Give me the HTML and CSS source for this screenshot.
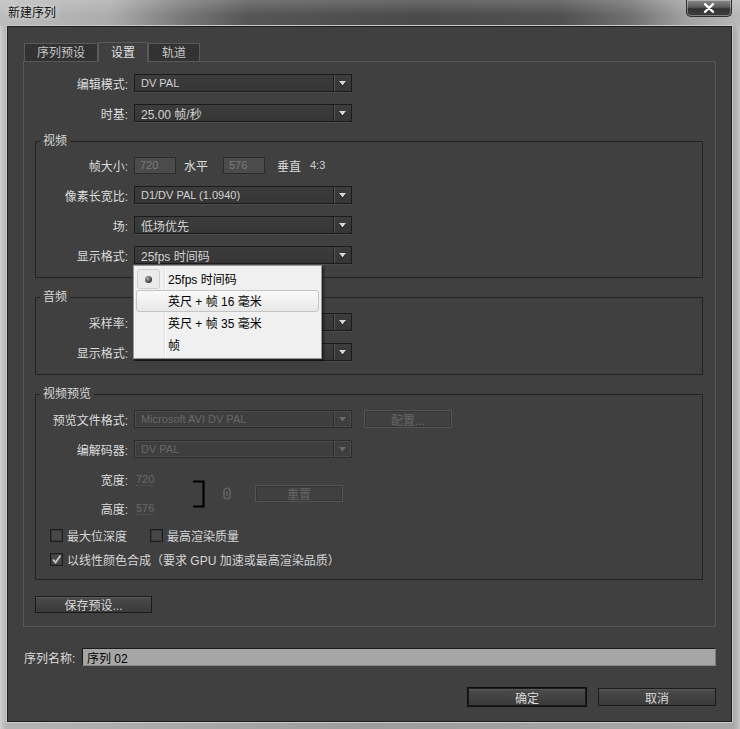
FILE: index.html
```html
<!DOCTYPE html>
<html lang="zh-CN">
<head>
<meta charset="utf-8">
<title>新建序列</title>
<link rel="stylesheet" href="styles.css">
</head>
<body>
<div class="win">
  <div class="titlebar">
    <span class="title">新建序列</span>
    <span class="close"><svg width="12" height="10" viewBox="0 0 12 10"><path d="M2 1.2 L10 8.8 M10 1.2 L2 8.8" stroke="#fff" stroke-width="2.3" stroke-linecap="round"/></svg></span>
  </div>
  <div class="client">
    <div class="tabs">
      <span class="tab t1">序列预设</span>
      <span class="tab t2 active">设置</span>
      <span class="tab t3">轨道</span>
    </div>
    <div class="panel">
      <div class="row"><span class="lbl">编辑模式:</span><div class="select"><span class="val lat">DV PAL</span><span class="arrow"><svg width="7" height="5" viewBox="0 0 7 5"><polygon points="0,0 7,0 3.5,4.5"/></svg></span></div></div>
      <div class="row"><span class="lbl">时基:</span><div class="select"><span class="val">25.00 帧/秒</span><span class="arrow"><svg width="7" height="5" viewBox="0 0 7 5"><polygon points="0,0 7,0 3.5,4.5"/></svg></span></div></div>

      <fieldset class="group g-video">
        <legend>视频</legend>
        <div class="row"><span class="lbl">帧大小:</span><span class="num">720</span><span class="unit">水平</span><span class="num">576</span><span class="unit unit2">垂直</span><span class="ratio lat">4:3</span></div>
        <div class="row"><span class="lbl">像素长宽比:</span><div class="select"><span class="val lat">D1/DV PAL (1.0940)</span><span class="arrow"><svg width="7" height="5" viewBox="0 0 7 5"><polygon points="0,0 7,0 3.5,4.5"/></svg></span></div></div>
        <div class="row"><span class="lbl">场:</span><div class="select"><span class="val">低场优先</span><span class="arrow"><svg width="7" height="5" viewBox="0 0 7 5"><polygon points="0,0 7,0 3.5,4.5"/></svg></span></div></div>
        <div class="row"><span class="lbl">显示格式:</span><div class="select open"><span class="val">25fps 时间码</span><span class="arrow"><svg width="7" height="5" viewBox="0 0 7 5"><polygon points="0,0 7,0 3.5,4.5"/></svg></span>
          <div class="menu">
            <div class="mi"><span class="ic"><span class="chk"><span class="dot"></span></span></span><span class="mt">25fps 时间码</span></div>
            <div class="mi hover"><span class="ic"></span><span class="mt">英尺 + 帧 16 毫米</span></div>
            <div class="mi"><span class="ic"></span><span class="mt">英尺 + 帧 35 毫米</span></div>
            <div class="mi"><span class="ic"></span><span class="mt">帧</span></div>
          </div>
        </div></div>
      </fieldset>

      <fieldset class="group g-audio">
        <legend>音频</legend>
        <div class="row"><span class="lbl">采样率:</span><div class="select"><span class="val"></span><span class="arrow"><svg width="7" height="5" viewBox="0 0 7 5"><polygon points="0,0 7,0 3.5,4.5"/></svg></span></div></div>
        <div class="row"><span class="lbl">显示格式:</span><div class="select"><span class="val"></span><span class="arrow"><svg width="7" height="5" viewBox="0 0 7 5"><polygon points="0,0 7,0 3.5,4.5"/></svg></span></div></div>
      </fieldset>

      <fieldset class="group g-preview">
        <legend>视频预览</legend>
        <div class="row"><span class="lbl">预览文件格式:</span><div class="select dis"><span class="val lat">Microsoft AVI DV PAL</span><span class="arrow"><svg width="7" height="5" viewBox="0 0 7 5"><polygon points="0,0 7,0 3.5,4.5"/></svg></span></div><span class="btn dis cfg">配置...</span></div>
        <div class="row"><span class="lbl">编解码器:</span><div class="select dis"><span class="val lat">DV PAL</span><span class="arrow"><svg width="7" height="5" viewBox="0 0 7 5"><polygon points="0,0 7,0 3.5,4.5"/></svg></span></div></div>
        <div class="dims">
          <div class="dimcol">
            <div class="row r30"><span class="lbl">宽度:</span><span class="hot">720</span></div>
            <div class="row r29"><span class="lbl">高度:</span><span class="hot">576</span></div>
          </div>
          <svg class="bracket" width="12" height="28" viewBox="0 0 12 28"><path d="M0 1.5 H10.5 V26.5 H0" fill="none" stroke="#000" stroke-width="2.2"/></svg>
          <svg class="link" width="8" height="13" viewBox="0 0 8 13"><rect x="1" y="1" width="6" height="11" rx="3" fill="none" stroke="#6c6c6c" stroke-width="1.2"/><path d="M4 4 V9" stroke="#6c6c6c" stroke-width="1.2"/></svg>
          <span class="btn dis reset">重置</span>
        </div>
        <div class="cbrow">
          <label class="cb first"><span class="box"></span><span>最大位深度</span></label>
          <label class="cb"><span class="box"></span><span>最高渲染质量</span></label>
        </div>
        <div class="cbrow">
          <label class="cb"><span class="box checked"><svg width="11" height="11" viewBox="0 0 11 11"><path d="M2 5.5 L4.5 8.5 L9.5 1.5" fill="none" stroke="#c8c8c8" stroke-width="1.8"/></svg></span><span>以线性颜色合成（要求 GPU 加速或最高渲染品质）</span></label>
        </div>
      </fieldset>

      <span class="btn save">保存预设...</span>
    </div>

    <div class="namerow">
      <span class="namelbl">序列名称:</span>
      <div class="nameinput">序列 02</div>
    </div>

    <div class="actions">
      <span class="btn big default">确定</span>
      <span class="btn big">取消</span>
    </div>
  </div>
</div>
</body>
</html>
```

FILE: styles.css
```css
* { box-sizing: border-box; }
html, body { margin: 0; padding: 0; }
body {
  width: 740px;
  height: 729px;
  overflow: hidden;
  background: #a8a8a8;
  font-family: "Liberation Sans", "Noto Sans CJK SC", sans-serif;
  font-size: 12px;
  color: #d8d8d8;
}

.win {
  width: 740px;
  height: 729px;
  display: flex;
  flex-direction: column;
  background: linear-gradient(90deg, #cfcfcf 0, #b4b4b4 6px, #9c9c9c 50%, #a8a8a8 733px, #c4c4c4 740px);
}

.titlebar {
  height: 26px;
  flex: none;
  display: flex;
  justify-content: space-between;
  align-items: flex-start;
  background:
    linear-gradient(180deg, rgba(255,255,255,0.18), rgba(255,255,255,0) 60%),
    linear-gradient(90deg, #bdbdbd 0, #acacac 110px, #7a7a7a 180px, #555 250px, #4a4a4a 420px, #505050 560px, #707070 630px, #a4a4a4 690px, #b8b8b8 740px);
}
.title {
  padding: 6px 0 0 8px;
  color: #111;
  font-size: 12px;
  line-height: 14px;
  text-shadow: 0 0 5px rgba(255,255,255,0.8);
}
.close {
  width: 46px;
  height: 17px;
  margin-right: 8px;
  border: 1px solid #2e2e2e;
  border-top: none;
  border-radius: 0 0 5px 5px;
  background: linear-gradient(180deg, #8a8a8a, #5a5a5a 45%, #333 55%, #3e3e3e);
  box-shadow: inset 0 0 0 1px rgba(255,255,255,0.35);
  display: flex;
  align-items: center;
  justify-content: center;
}

.client {
  flex: 1;
  margin: 0 8px 7px 7px;
  background: #404040;
  border: 1px solid #1e1e1e;
  box-shadow: 0 0 0 1px #cacaca;
  padding: 15px 15px 0 15px;
  display: flex;
  flex-direction: column;
}

.tabs {
  display: flex;
  align-items: flex-end;
  height: 19px;
  margin-left: 1px;
  flex: none;
}
.tab {
  height: 18px;
  display: flex;
  align-items: center;
  justify-content: center;
  background: #323232;
  border: 1px solid #5a5a5a;
  border-bottom: none;
  color: #c6c6c6;
  line-height: 16px;
}
.t1 { width: 74px; }
.t2 { width: 50px; }
.t3 { width: 52px; }
.tab.active {
  height: 20px;
  margin-bottom: -1px;
  background: #404040;
  color: #e2e2e2;
  position: relative;
}

.panel {
  flex: none;
  height: 566px;
  border: 1px solid #585858;
  padding-top: 6px;
  --lw: 104px;
}

.row {
  display: flex;
  align-items: center;
  height: 30px;
}
.lbl {
  flex: none;
  width: var(--lw);
  margin-right: 6px;
  text-align: right;
  white-space: nowrap;
  color: #dcdcdc;
}
.lat { font-size: 11px; }

.select {
  flex: none;
  width: 218px;
  height: 18px;
  border: 1px solid #1b1b1b;
  background: linear-gradient(180deg, #3c3c3c, #363636);
  box-shadow: 0 1px 0 #4b4b4b;
  display: flex;
  align-items: center;
}
.select .val {
  flex: 1;
  padding-left: 6px;
  color: #d2d2d2;
  white-space: nowrap;
  overflow: hidden;
}
.select .arrow {
  flex: none;
  width: 18px;
  height: 16px;
  border-left: 1px solid #202020;
  box-shadow: inset 1px 0 0 #555;
  display: flex;
  align-items: center;
  justify-content: center;
}
.select .arrow svg { fill: #d8d8d8; filter: drop-shadow(0 1px 0 #111); }
.select.dis {
  border-color: #2c2c2c;
  background: #3e3e3e;
  box-shadow: inset 0 0 0 1px #4c4c4c;
}
.select.dis .val { color: #686868; }
.select.dis .arrow { border-left-color: #2c2c2c; box-shadow: inset 1px 0 0 #4c4c4c; }
.select.dis .arrow svg { fill: #6a6a6a; filter: none; }

.group {
  margin: 5px 12px 0 11px;
  padding: 1px 0 7px 0;
  border: 1px solid #232323;
  min-width: 0;
  --lw: 92px;
}
.group legend {
  padding: 0 3px;
  margin-left: 4px;
  line-height: 16px;
  color: #d8d8d8;
}
.g-audio { margin-top: 11px; padding: 2px 0 7px 0; }
.g-preview { margin-top: 11px; padding: 2px 0 8px 0; }

.num {
  flex: none;
  width: 42px;
  height: 17px;
  border: 1px solid #2c2c2c;
  background: #4b4b4b;
  color: #7c7c7c;
  font-size: 11px;
  line-height: 15px;
  padding-left: 5px;
}
.unit { flex: none; width: 47px; padding-left: 8px; color: #dcdcdc; }
.unit2 { width: 45px; padding-left: 12px; }
.ratio { color: #cfcfcf; }

.btn {
  flex: none;
  display: flex;
  align-items: center;
  justify-content: center;
  border: 1px solid #1b1b1b;
  background: linear-gradient(180deg, #4b4b4b, #3a3a3a);
  box-shadow: inset 0 1px 0 #5a5a5a;
  color: #dadada;
  white-space: nowrap;
}
.btn.dis {
  background: transparent;
  border-color: #545454;
  box-shadow: inset 0 0 0 1px #363636;
  color: #666;
}
.cfg { width: 88px; height: 18px; margin-left: 12px; }

.dims {
  display: flex;
  align-items: center;
}
.dimcol { flex: none; width: 157px; }
.r30 { height: 30px; }
.r29 { height: 29px; }
.hot {
  margin-left: 2px;
  color: #6a6a6a;
  font-size: 11px;
  line-height: 12px;
  border-bottom: 1px dotted #5c5c5c;
}
.bracket { flex: none; }
.link { flex: none; margin-left: 18px; }
.reset { width: 88px; height: 17px; margin-left: 24px; }

.cbrow {
  display: flex;
  align-items: center;
  height: 24px;
  padding-left: 14px;
}
.cb {
  display: flex;
  align-items: center;
  gap: 4px;
  color: #d6d6d6;
}
.cb.first { width: 100px; }
.box {
  flex: none;
  width: 13px;
  height: 13px;
  border: 1px solid #1c1c1c;
  background: #474747;
  box-shadow: inset 0 0 0 1px #393939;
  display: flex;
  align-items: center;
  justify-content: center;
}

.save { width: 117px; height: 17px; margin: 16px 0 0 11px; }

.namerow {
  display: flex;
  align-items: center;
  height: 18px;
  margin-top: 21px;
  flex: none;
}
.namelbl { flex: none; width: 59px; padding-left: 1px; color: #dcdcdc; }
.nameinput {
  flex: 1;
  height: 18px;
  background: #a6a6a6;
  border: 1px solid #1a1a1a;
  border-right-color: #7c7c7c;
  border-bottom-color: #8a8a8a;
  color: #000;
  padding-left: 4px;
  display: flex;
  align-items: center;
}

.actions {
  display: flex;
  justify-content: flex-end;
  gap: 12px;
  margin-top: 22px;
  flex: none;
}
.btn.big { width: 118px; height: 18px; }
.btn.default { box-shadow: 0 0 0 1px #0e0e0e, inset 0 1px 0 #5a5a5a; }

/* popup menu */
.select.open { position: relative; }
.menu {
  position: absolute;
  left: -2px;
  top: 18px;
  width: 189px;
  z-index: 10;
  background: #f0f0f0 linear-gradient(90deg, transparent 30px, #e0e0e0 30px, #e0e0e0 31px, #fff 31px, #fff 32px, transparent 32px);
  border: 1px solid #979797;
  padding: 2px;
  box-shadow: 2px 2px 2px rgba(0,0,0,0.45);
  color: #000;
  font-size: 12px;
}
.mi {
  height: 22px;
  display: flex;
  align-items: center;
  border: 1px solid transparent;
  border-radius: 3px;
}
.mi.hover {
  border-color: #c4c4c4;
  background: linear-gradient(180deg, #f9f9f9, #e8e8e8);
}
.ic {
  flex: none;
  width: 27px;
  height: 20px;
  display: flex;
  align-items: center;
}
.chk {
  width: 23px;
  height: 20px;
  border: 1px solid #cfcfcf;
  border-radius: 3px;
  background: #ebebeb;
  display: flex;
  align-items: center;
  justify-content: center;
}
.dot {
  width: 7px;
  height: 7px;
  border-radius: 50%;
  background: radial-gradient(circle at 35% 35%, #b0b0b0, #3a3a3a 70%);
}
.mt { margin-left: 4px; white-space: nowrap; padding-bottom: 2px; }
```
